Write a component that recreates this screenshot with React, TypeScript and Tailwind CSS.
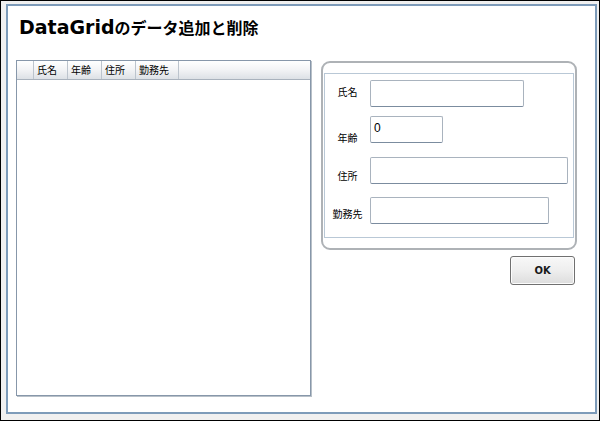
import React from 'react';

const jp = { fontFamily: '"Noto Sans CJK JP", "DejaVu Sans", sans-serif' };

export default function App() {
  return (
    <div className="w-[600px] h-[421px] border border-black bg-[#f0f0f0] pl-[5px] pt-[3px] pr-[2px] pb-[6px]">
      <div className="w-full h-full border-2 border-[#7d9bb9] bg-white pl-[8px]">
        <h1 className="mt-[9px] ml-[3px] h-[24px] leading-[24px] font-bold text-black whitespace-nowrap">
          <span className="text-[19px]" style={{ fontFamily: '"DejaVu Sans", sans-serif' }}>DataGrid</span>
          <span className="text-[16px]" style={jp}>のデータ追加と削除</span>
        </h1>

        <div className="mt-[21px] flex gap-[10px]">
          <DataGrid />
          <div className="w-[256px] mt-px flex flex-col">
            <EntryForm />
            <div className="flex justify-end mt-[6px] mr-[2px]">
              <button className="w-[65px] h-[29px] rounded-[3px] border border-[#707070] bg-gradient-to-b from-[#f8f8f8] via-[#eeeeee] to-[#dddddd] text-[10px] font-bold text-[#1a1a1a] shadow-[inset_0_0_0_1px_#fcfcfc]" style={{ fontFamily: '"DejaVu Sans", sans-serif' }}>
                OK
              </button>
            </div>
          </div>
        </div>
      </div>
    </div>
  );
}

function DataGrid() {
  const cols = [
    { label: '氏名', w: 'w-[34px]' },
    { label: '年齢', w: 'w-[34px]' },
    { label: '住所', w: 'w-[34px]' },
    { label: '勤務先', w: 'w-[43px]' },
  ];
  return (
    <div className="w-[295px] h-[336px] border border-[#8797aa] bg-white shadow-[1px_1px_0_#b8c0c8] flex flex-col">
      <div className="h-[19px] flex border-b border-[#a9b2bd] bg-gradient-to-b from-[#ffffff] via-[#f2f3f5] to-[#dde1e6]">
        <div className="w-[17px] h-full border-r border-[#bcc4cd]" />
        {cols.map((c) => (
          <div key={c.label} className={`${c.w} h-full border-r border-[#bcc4cd] pl-[3px] flex items-center text-[10px] leading-none text-black`} style={jp}>
            {c.label}
          </div>
        ))}
      </div>
      <div className="flex-1" />
    </div>
  );
}

function EntryForm() {
  return (
    <div className="h-[189px] rounded-[9px] border-2 border-[#aeb2b6] pt-[10px] pb-[10px] pl-px pr-px">
      <div className="h-full border border-[#b9c8d6] pt-[6px]">
        <Row label="氏名" labelPt="pt-[6px]" inputW="w-[154px]" />
        <Row label="年齢" labelPt="pt-[16px]" inputW="w-[73px]" value="0" className="mt-[9px]" />
        <Row label="住所" labelPt="pt-[13px]" inputW="w-[198px]" className="mt-[14px]" />
        <Row label="勤務先" labelPt="pt-[11px]" inputW="w-[179px]" className="mt-[13px]" />
      </div>
    </div>
  );
}

function Row({ label, labelPt, inputW, value, className = '' }: {
  label: string; labelPt: string; inputW: string; value?: string; className?: string;
}) {
  return (
    <div className={`flex items-start h-[27px] ${className}`}>
      <div className={`w-[45px] h-full text-center text-[10px] leading-[12px] text-black ${labelPt}`} style={jp}>
        {label}
      </div>
      <div className={`${inputW} h-full rounded-[2px] border border-[#a9b3be] border-b-[#7b8c9f] bg-white pl-[3px] pt-[4px] text-[12px] leading-[14px] text-black`} style={{ fontFamily: '"Liberation Sans", sans-serif' }}>
        {value}
      </div>
    </div>
  );
}
